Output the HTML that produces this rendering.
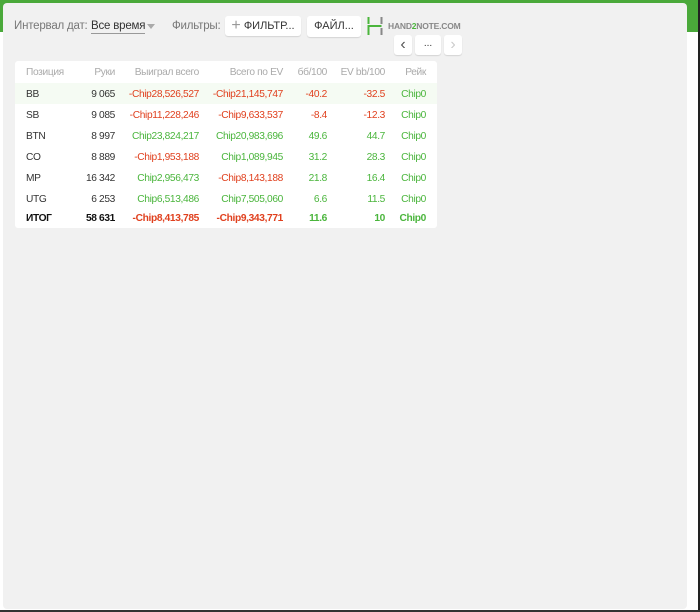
<!DOCTYPE html>
<html><head><meta charset="utf-8"><style>
*{margin:0;padding:0;box-sizing:border-box}
body{width:700px;height:612px;background:#fff;position:relative;overflow:hidden;font-family:"Liberation Sans","Noto Sans CJK SC",sans-serif;font-size:10.2px;letter-spacing:-0.35px}
.green{position:absolute;left:0;top:0;width:700px;height:32px;background:#4aa93a}
.rb{position:absolute;right:0;top:0;width:2px;height:612px;background:#222}
.bb{position:absolute;left:0;bottom:0;width:700px;height:2px;background:#333}
.panel{position:absolute;left:3px;top:3px;width:684px;height:606px;background:#f1f1f1;border-radius:4px}
.t{position:absolute;top:17px;color:#777;font-size:11.5px;letter-spacing:-0.2px}
.btn{position:absolute;background:#fff;border-radius:3px;box-shadow:0 1px 1px rgba(0,0,0,.12);font-size:11px;letter-spacing:0;color:#333;text-align:center}
.card{position:absolute;left:15px;top:61px;width:422px;height:167px;background:#fff;border-radius:3px}
.r{position:absolute;left:0;width:422px;height:21px}
.r span{position:absolute;top:6px;white-space:nowrap}
.c0{left:11px}.c1{right:322px}.c2{right:238px}.c3{right:154px}.c4{right:110px}.c5{right:52px}.c6{right:11px}
.h{color:#aaa}.n{color:#333}.red{color:#e0401e}.gr{color:#4ab53c}.b{font-weight:bold}
</style></head><body>
<div class="green"></div><div class="rb"></div><div class="bb"></div>
<div class="panel">
<div class="t" style="left:11px">Интервал дат:</div>
<div class="t" style="left:88px;color:#333;border-bottom:1px solid #999;line-height:13px">Все время</div>
<div style="position:absolute;left:144px;top:21px;border:4px solid transparent;border-top:5px solid #aaa"></div>
<div class="t" style="left:169px">Фильтры:</div>
<div class="btn" style="left:222px;top:13px;width:76px;height:20px;line-height:20px"><span style="color:#999;font-size:16px;vertical-align:-1px">+</span> ФИЛЬТР...</div>
<div class="btn" style="left:304px;top:13px;width:54px;height:21px;line-height:21px">ФАЙЛ...</div>
<svg style="position:absolute;left:364px;top:14px" width="16" height="18" viewBox="0 0 16 18"><path d="M1.5 0v7M1.5 8v10" stroke="#4ab53c" stroke-width="2"/><path d="M1.5 9h13" stroke="#4ab53c" stroke-width="2"/><path d="M14.5 0v7" stroke="#888" stroke-width="2"/><path d="M14.5 11v7" stroke="#888" stroke-width="2"/></svg>
<div style="position:absolute;left:385px;top:18px;font-size:8.5px;font-weight:bold;color:#888;letter-spacing:-0.2px">HAND<span style="color:#4ab53c">2</span>NOTE.COM</div>
<div class="btn" style="left:391px;top:32px;width:18px;height:20px;line-height:20px;font-size:16px;color:#555">‹</div>
<div class="btn" style="left:412px;top:32px;width:26px;height:20px;line-height:18px;font-size:10px">...</div>
<div class="btn" style="left:441px;top:32px;width:18px;height:20px;line-height:20px;font-size:16px;color:#ccc">›</div>
</div>
<div class="card">
<div class="r" style="top:0px"><span class="c0 h">Позиция</span><span class="c1 h">Руки</span><span class="c2 h">Выиграл всего</span><span class="c3 h">Всего по EV</span><span class="c4 h">бб/100</span><span class="c5 h">EV bb/100</span><span class="c6 h">Рейк</span></div>
<div class="r" style="top:22px;background:#f5fbf3"><span class="c0 n">BB</span><span class="c1 n">9 065</span><span class="c2 red">-Chip28,526,527</span><span class="c3 red">-Chip21,145,747</span><span class="c4 red">-40.2</span><span class="c5 red">-32.5</span><span class="c6 gr">Chip0</span></div>
<div class="r" style="top:43px"><span class="c0 n">SB</span><span class="c1 n">9 085</span><span class="c2 red">-Chip11,228,246</span><span class="c3 red">-Chip9,633,537</span><span class="c4 red">-8.4</span><span class="c5 red">-12.3</span><span class="c6 gr">Chip0</span></div>
<div class="r" style="top:64px"><span class="c0 n">BTN</span><span class="c1 n">8 997</span><span class="c2 gr">Chip23,824,217</span><span class="c3 gr">Chip20,983,696</span><span class="c4 gr">49.6</span><span class="c5 gr">44.7</span><span class="c6 gr">Chip0</span></div>
<div class="r" style="top:85px"><span class="c0 n">CO</span><span class="c1 n">8 889</span><span class="c2 red">-Chip1,953,188</span><span class="c3 gr">Chip1,089,945</span><span class="c4 gr">31.2</span><span class="c5 gr">28.3</span><span class="c6 gr">Chip0</span></div>
<div class="r" style="top:106px"><span class="c0 n">MP</span><span class="c1 n">16 342</span><span class="c2 gr">Chip2,956,473</span><span class="c3 red">-Chip8,143,188</span><span class="c4 gr">21.8</span><span class="c5 gr">16.4</span><span class="c6 gr">Chip0</span></div>
<div class="r" style="top:127px"><span class="c0 n">UTG</span><span class="c1 n">6 253</span><span class="c2 gr">Chip6,513,486</span><span class="c3 gr">Chip7,505,060</span><span class="c4 gr">6.6</span><span class="c5 gr">11.5</span><span class="c6 gr">Chip0</span></div>
<div class="r b" style="top:146px"><span class="c0" style="color:#111">ИТОГ</span><span class="c1" style="color:#111">58 631</span><span class="c2 red">-Chip8,413,785</span><span class="c3 red">-Chip9,343,771</span><span class="c4 gr">11.6</span><span class="c5 gr">10</span><span class="c6 gr">Chip0</span></div>
</div>
</body></html>
